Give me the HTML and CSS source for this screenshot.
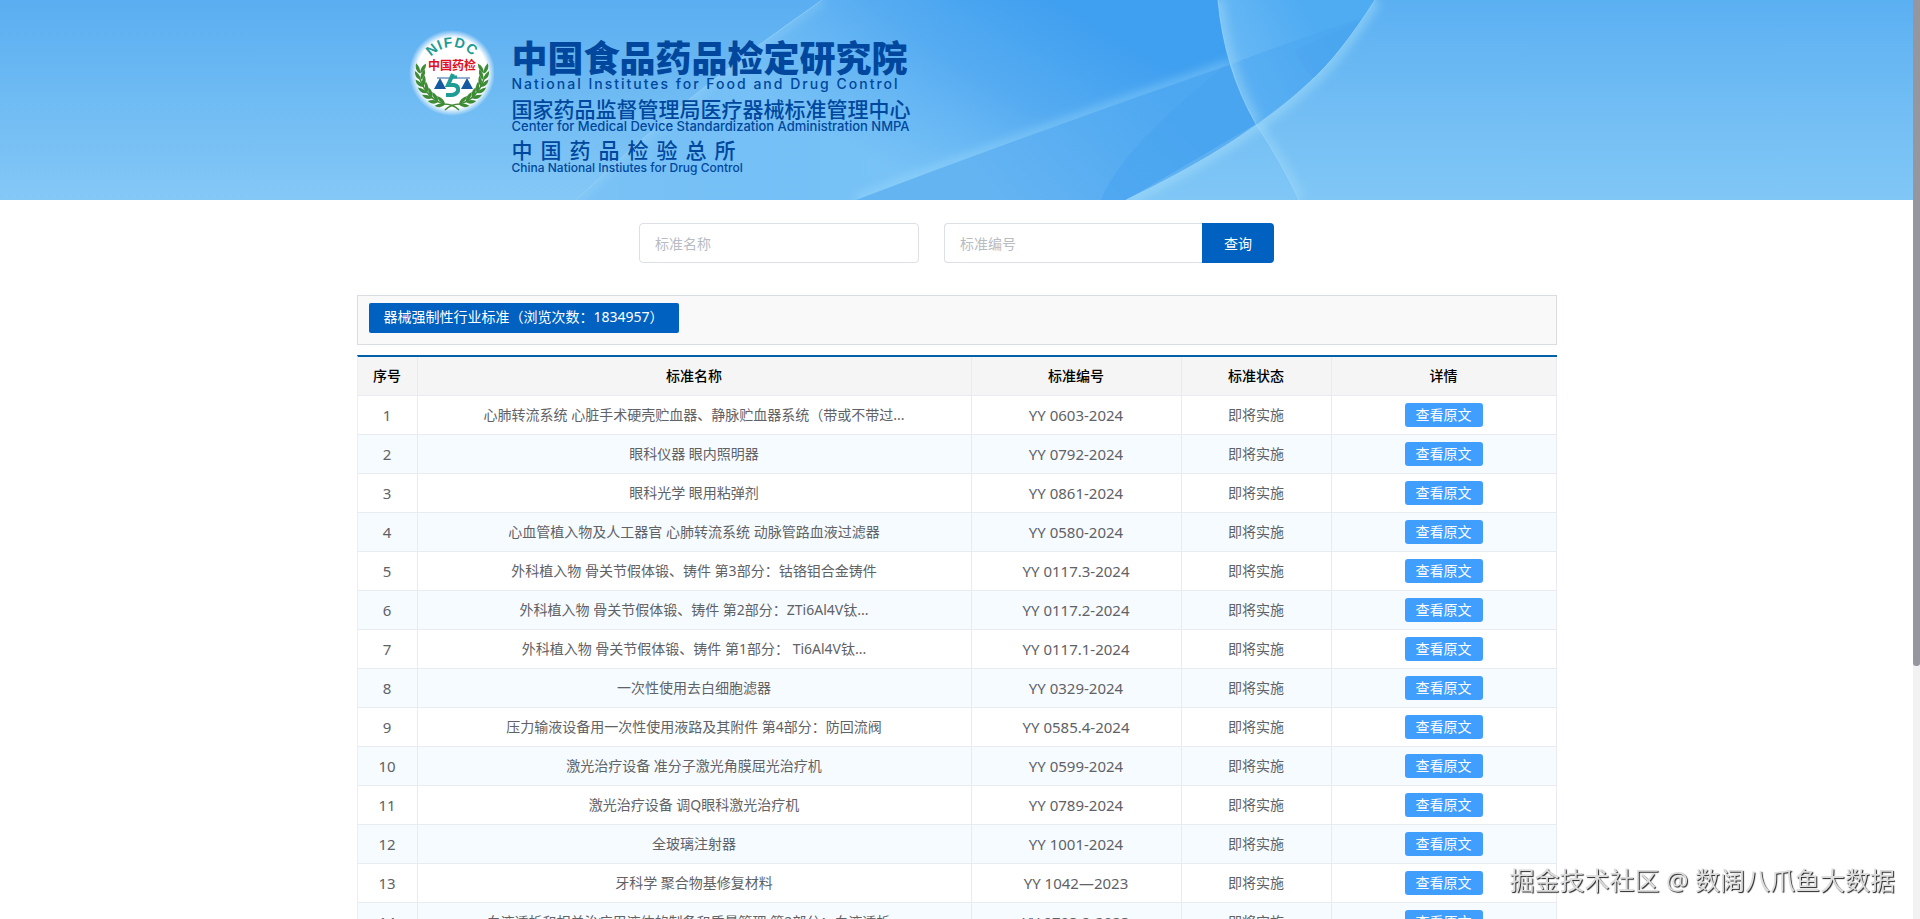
FILE: index.html
```
<!DOCTYPE html>
<html lang="zh-CN">
  <head>
    <meta charset="UTF-8" />
    <meta name="viewport" content="width=device-width, initial-scale=1.0" />
    <title>器械强制性行业标准</title>
    <link rel="stylesheet" href="styles.css">
  </head>
  <body>
    <div class="page">
      <header class="banner">
        <svg class="banner-bg" viewBox="0 0 1913 200" preserveAspectRatio="xMidYMid slice" aria-hidden="true">
          <defs>
            <linearGradient id="sky" x1="0" y1="0" x2="0" y2="1">
              <stop offset="0" stop-color="#5aaef1" />
              <stop offset="1" stop-color="#84c8f6" />
            </linearGradient>
            <linearGradient id="mid" gradientUnits="userSpaceOnUse" x1="1060" y1="0" x2="940" y2="200">
              <stop offset="0" stop-color="#3f9ff0" />
              <stop offset="0.45" stop-color="#55abf1" />
              <stop offset="1" stop-color="#7cc5f7" />
            </linearGradient>
            <linearGradient id="midFade" gradientUnits="userSpaceOnUse" x1="560" y1="0" x2="960" y2="0">
              <stop offset="0" stop-color="#7cc3f6" stop-opacity="0.9" />
              <stop offset="1" stop-color="#5cb0f2" stop-opacity="0" />
            </linearGradient>
            <linearGradient id="low" gradientUnits="userSpaceOnUse" x1="1150" y1="80" x2="1000" y2="210">
              <stop offset="0" stop-color="#4ea8f1" />
              <stop offset="1" stop-color="#65b4f2" />
            </linearGradient>
            <linearGradient id="right" gradientUnits="userSpaceOnUse" x1="0" y1="0" x2="0" y2="200">
              <stop offset="0" stop-color="#5bb0f2" />
              <stop offset="0.55" stop-color="#72bdf4" />
              <stop offset="1" stop-color="#80c7f6" />
            </linearGradient>
            <linearGradient id="fin" gradientUnits="userSpaceOnUse" x1="1225" y1="80" x2="1320" y2="30">
              <stop offset="0" stop-color="#6cbbf5" />
              <stop offset="1" stop-color="#4fabf2" />
            </linearGradient>
            <filter id="soft" x="-20%" y="-20%" width="140%" height="140%">
              <feGaussianBlur stdDeviation="5" />
            </filter>
            <clipPath id="clipMid">
              <path d="M822 0 Q690 90 576 200 H856 Q1040 130 1232 64 Q1221 32 1218 0Z" />
            </clipPath>
            <clipPath id="clipRight">
              <path d="M1375 0 Q1339 56 1310 82 Q1250 140 1126 200 H1913 V0Z" />
            </clipPath>
            <clipPath id="clipFin">
              <path d="M1218 0 Q1224 68 1256 124 Q1335 70 1375 0Z" />
            </clipPath>
            <clipPath id="clipTail">
              <path d="M1256 124 Q1283 165 1299 200 H1420 V100Z" />
            </clipPath>
          </defs>
          <rect width="1913" height="200" fill="url(#sky)" />
          <g clip-path="url(#clipMid)">
            <rect x="560" width="700" height="200" fill="url(#mid)" />
            <rect x="560" width="700" height="200" fill="url(#midFade)" />
            <path d="M822 0 Q690 90 576 200" stroke="#a5dafa" stroke-opacity="0.3" stroke-width="10" fill="none" filter="url(#soft)" />
            <path d="M856 200 Q1040 130 1232 64" stroke="#a5e0fc" stroke-opacity="0.4" stroke-width="10" fill="none" filter="url(#soft)" />
          </g>
          <path d="M856 200 Q1040 130 1232 64 L1256 124 L1126 200Z" fill="url(#low)" />
          <path d="M1222 68 Q1120 150 1101 200 H1126 Q1200 166 1256 124 L1232 64Z" fill="#48a4f0" fill-opacity="0.6" />
          <g clip-path="url(#clipFin)">
            <rect x="1210" width="170" height="130" fill="url(#fin)" />
            <path d="M1232 64 Q1300 38 1375 14 V130 H1250Z" fill="#4aa5f0" fill-opacity="0.5" />
            <path d="M1295 50 Q1300 64 1314 78 L1375 14Z" fill="#4aa2ef" fill-opacity="0.4" />
            <path d="M1218 0 Q1224 68 1256 124" stroke="#a0dafa" stroke-opacity="0.5" stroke-width="12" fill="none" filter="url(#soft)" />
          </g>
          <g clip-path="url(#clipRight)">
            <rect x="1120" width="793" height="200" fill="url(#right)" />
            <path d="M1375 0 Q1339 56 1310 82 Q1250 140 1126 200" stroke="#a8dffa" stroke-opacity="0.5" stroke-width="12" fill="none" filter="url(#soft)" />
            <g clip-path="url(#clipTail)">
              <path d="M1256 124 Q1283 165 1299 200" stroke="#a8dffa" stroke-opacity="0.4" stroke-width="12" fill="none" filter="url(#soft)" />
            </g>
          </g>
          <g fill="none" stroke="#a3dafa" stroke-opacity="0.6">
            <path d="M1218 0 Q1224 68 1256 124 Q1283 165 1299 200" />
            <path d="M1375 0 Q1339 56 1310 82 Q1250 140 1126 200" />
            <path d="M822 0 Q690 90 576 200" stroke-opacity="0.5" />
          </g>
        </svg>

        <div class="container brand">
          <svg class="emblem" viewBox="0 0 86 90" role="img" aria-label="NIFDC 中国药检">
            <defs>
              <radialGradient id="glow">
                <stop offset="0.82" stop-color="#fff" />
                <stop offset="1" stop-color="#fff" stop-opacity="0" />
              </radialGradient>
              <g id="leaf">
                <path d="M45 77 Q40 76 35 81 Q42 83 45 77Z" />
                <path d="M45 77 Q42 71 35 71 Q38 77 45 77Z" />
              </g>
              <g id="branch" fill="#3d8b35">
                <use href="#leaf" transform="rotate(14 44 45)" />
                <use href="#leaf" transform="rotate(27 44 45)" />
                <use href="#leaf" transform="rotate(40 44 45)" />
                <use href="#leaf" transform="rotate(53 44 45)" />
                <use href="#leaf" transform="rotate(66 44 45)" />
                <use href="#leaf" transform="rotate(79 44 45)" />
                <use href="#leaf" transform="rotate(91 44 45)" />
                <path d="M51 82 Q45 76 36 76 Q19 71 12 51" fill="none" stroke="#3d8b35" stroke-width="1.5" />
              </g>
              <path id="arc" d="M17 46 A27 27 0 0 1 71 46" />
            </defs>
            <circle cx="44" cy="45" r="43" fill="url(#glow)" />
            <use href="#branch" />
            <use href="#branch" transform="matrix(-1 0 0 1 88 0)" />
            <text class="emblem-arc"><textPath href="#arc" startOffset="50%" text-anchor="middle">NIFDC</textPath></text>
            <text class="emblem-name" x="44" y="42" text-anchor="middle">中国药检</text>
            <path d="M29 50 H62" stroke="#2c5f9e" />
            <path d="M32 50 L26 61 H38Z M59 50 L53 61 H65Z" fill="#1659a0" />
            <path d="M45 46 L40 57 H46 Q51 58 50 63 Q48 67 43 67 H38" fill="none" stroke="#1e9c96" stroke-width="4" />
            <path d="M43 49 H49" stroke="#1e9c96" stroke-width="3" />
          </svg>
          <div class="brand-text">
            <h1>中国食品药品检定研究院</h1>
            <p class="en en-wide">National Institutes for Food and Drug Control</p>
            <p class="zh">国家药品监督管理局医疗器械标准管理中心</p>
            <p class="en en-mid">Center for Medical Device Standardization Administration NMPA</p>
            <p class="zh zh-wide">中国药品检验总所</p>
            <p class="en">China National Instiutes for Drug Control</p>
          </div>
        </div>
      </header>

      <form class="search">
        <input class="field" type="text" placeholder="标准名称" aria-label="标准名称" />
        <div class="field-group">
          <input class="field" type="text" placeholder="标准编号" aria-label="标准编号" />
          <button class="search-btn" type="button">查询</button>
        </div>
      </form>

      <main class="container">
        <div class="panel">
          <span class="panel-title">器械强制性行业标准（浏览次数：1834957）</span>
        </div>

        <table class="list">
          <colgroup>
            <col class="col-index" />
            <col />
            <col class="col-code" />
            <col class="col-status" />
            <col class="col-action" />
          </colgroup>
          <thead>
            <tr><th>序号</th><th>标准名称</th><th>标准编号</th><th>标准状态</th><th>详情</th></tr>
          </thead>
          <tbody>
            <tr><td>1</td><td>心肺转流系统 心脏手术硬壳贮血器、静脉贮血器系统（带或不带过...</td><td>YY 0603-2024</td><td>即将实施</td><td><button class="view-btn">查看原文</button></td></tr>
            <tr><td>2</td><td>眼科仪器 眼内照明器</td><td>YY 0792-2024</td><td>即将实施</td><td><button class="view-btn">查看原文</button></td></tr>
            <tr><td>3</td><td>眼科光学 眼用粘弹剂</td><td>YY 0861-2024</td><td>即将实施</td><td><button class="view-btn">查看原文</button></td></tr>
            <tr><td>4</td><td>心血管植入物及人工器官 心肺转流系统 动脉管路血液过滤器</td><td>YY 0580-2024</td><td>即将实施</td><td><button class="view-btn">查看原文</button></td></tr>
            <tr><td>5</td><td>外科植入物 骨关节假体锻、铸件 第3部分：钴铬钼合金铸件</td><td>YY 0117.3-2024</td><td>即将实施</td><td><button class="view-btn">查看原文</button></td></tr>
            <tr><td>6</td><td>外科植入物 骨关节假体锻、铸件 第2部分：ZTi6Al4V钛...</td><td>YY 0117.2-2024</td><td>即将实施</td><td><button class="view-btn">查看原文</button></td></tr>
            <tr><td>7</td><td>外科植入物 骨关节假体锻、铸件 第1部分： Ti6Al4V钛...</td><td>YY 0117.1-2024</td><td>即将实施</td><td><button class="view-btn">查看原文</button></td></tr>
            <tr><td>8</td><td>一次性使用去白细胞滤器</td><td>YY 0329-2024</td><td>即将实施</td><td><button class="view-btn">查看原文</button></td></tr>
            <tr><td>9</td><td>压力输液设备用一次性使用液路及其附件 第4部分：防回流阀</td><td>YY 0585.4-2024</td><td>即将实施</td><td><button class="view-btn">查看原文</button></td></tr>
            <tr><td>10</td><td>激光治疗设备 准分子激光角膜屈光治疗机</td><td>YY 0599-2024</td><td>即将实施</td><td><button class="view-btn">查看原文</button></td></tr>
            <tr><td>11</td><td>激光治疗设备 调Q眼科激光治疗机</td><td>YY 0789-2024</td><td>即将实施</td><td><button class="view-btn">查看原文</button></td></tr>
            <tr><td>12</td><td>全玻璃注射器</td><td>YY 1001-2024</td><td>即将实施</td><td><button class="view-btn">查看原文</button></td></tr>
            <tr><td>13</td><td>牙科学 聚合物基修复材料</td><td>YY 1042—2023</td><td>即将实施</td><td><button class="view-btn">查看原文</button></td></tr>
            <tr><td>14</td><td>血液透析和相关治疗用液体的制备和质量管理 第2部分：血液透析...</td><td>YY 0793.2-2023</td><td>即将实施</td><td><button class="view-btn">查看原文</button></td></tr>
          </tbody>
        </table>
      </main>
    </div>

    <div class="scrollbar"><div class="thumb"></div></div>
    <div class="watermark">掘金技术社区 @ 数阔八爪鱼大数据</div>
  </body>
</html>
```
FILE: styles.css
```
* {
  box-sizing: border-box;
  margin: 0;
  padding: 0;
}

body {
  display: flex;
  height: 100vh;
  overflow: hidden;
  background: #fff;
  color: #606266;
  font-family: "Noto Sans", "Noto Sans CJK SC", sans-serif;
  font-size: 14px;
}

button,
input {
  font: inherit;
}

.page {
  flex: 1;
  overflow-y: auto;
  scrollbar-width: none;
}

.container {
  width: 100%;
  max-width: 1200px;
  margin: 0 auto;
}

/* banner */
.banner {
  position: relative;
  height: 200px;
  overflow: hidden;
}

.banner-bg {
  position: absolute;
  inset: 0;
  width: 100%;
  height: 100%;
}

.brand {
  position: relative;
  display: flex;
  align-items: flex-start;
  gap: 18px;
  padding: 28px 0 0 51px;
  color: #00479d;
}

.emblem {
  width: 86px;
  height: 90px;
}

.emblem-arc {
  font: bold 14px "Liberation Sans", sans-serif;
  letter-spacing: 1px;
  fill: #1e9c96;
}

.emblem-name {
  font: bold 12px "Noto Sans CJK SC", sans-serif;
  fill: #e01020;
}

.brand-text {
  padding-top: 8px;
  white-space: nowrap;
}

.brand h1 {
  font: 900 36px/40px "Noto Sans CJK SC", sans-serif;
}

.zh {
  margin-top: 4px;
  font: 500 21px/24px "Noto Sans CJK SC", sans-serif;
}

.zh-wide {
  letter-spacing: 8px;
}

.en {
  font: 500 12px/13px Inter, "Liberation Sans", sans-serif;
}

.en-mid {
  font-size: 13px;
}

.en-wide {
  font-size: 14px;
  line-height: 16px;
  letter-spacing: 2px;
}

/* search */
.search {
  display: flex;
  justify-content: center;
  gap: 25px;
  padding: 23px 0 32px;
}

.field {
  width: 280px;
  height: 40px;
  padding: 0 15px;
  border: 1px solid #dcdfe6;
  border-radius: 4px;
  background: #fff;
  color: #606266;
}

.field::placeholder {
  color: #b8bcc4;
}

.field-group {
  display: flex;
}

.field-group .field {
  width: 258px;
  border-right: 0;
  border-radius: 4px 0 0 4px;
}

.search-btn {
  width: 72px;
  height: 40px;
  border: 0;
  border-radius: 0 4px 4px 0;
  background: #0061c1;
  color: #fff;
}

/* list */
.panel {
  height: 50px;
  padding: 7px 11px;
  border: 1px solid #d9dce0;
  background: #f9f9f9;
}

.panel-title {
  display: inline-block;
  height: 30px;
  padding: 0 15px;
  border-radius: 2px;
  background: #0061c1;
  color: #fff;
  line-height: 28px;
}

.list {
  width: 100%;
  margin-top: 10px;
  border-top: 2px solid #0060a8;
  border-left: 1px solid #ebeef5;
  border-spacing: 0;
  table-layout: fixed;
  text-align: center;
}

.col-index {
  width: 60px;
}

.col-code {
  width: 210px;
}

.col-status {
  width: 150px;
}

.col-action {
  width: 225px;
}

.list th,
.list td {
  height: 39px;
  border-right: 1px solid #e8ecf2;
  border-bottom: 1px solid #e8ecf2;
  line-height: 24px;
}

.list th {
  background: #f5f5f5;
  color: #000;
  font-weight: 500;
}

.list td:nth-child(1),
.list td:nth-child(3) {
  font-size: 15px;
}

.list tbody tr:nth-child(even) {
  background: #f6fbff;
}

.view-btn {
  width: 78px;
  height: 24px;
  border: 0;
  border-radius: 3px;
  background: #409eff;
  color: #fff;
  line-height: 24px;
  vertical-align: top;
}

.scrollbar {
  width: 7px;
  background: #f2f2f3;
}

.thumb {
  height: 72.5%;
  border-radius: 0 0 3px 3px;
  background: #96979e;
}

.watermark {
  position: fixed;
  right: 25px;
  bottom: 21px;
  color: #ddd;
  font-size: 25px;
  line-height: 36px;
  text-shadow: 1px 1px 1px #222;
}
```
